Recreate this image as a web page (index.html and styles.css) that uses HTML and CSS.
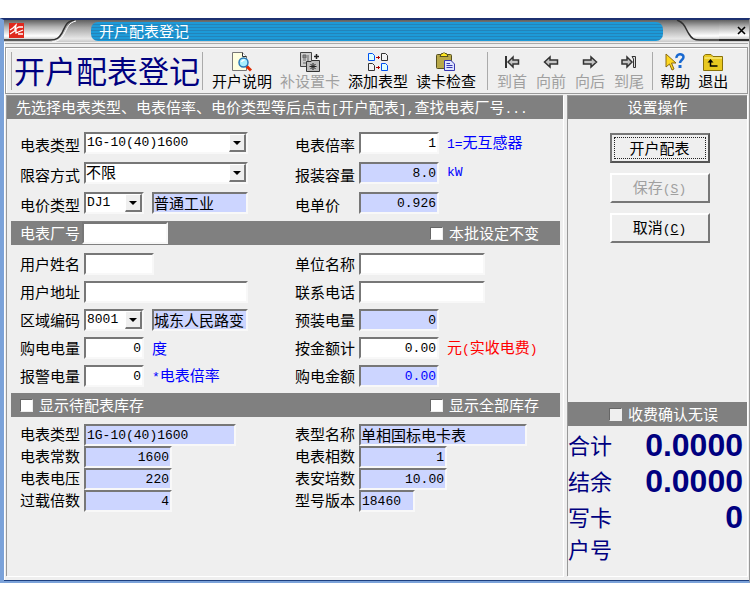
FILE: index.html
```html
<!DOCTYPE html>
<html lang="zh-CN">
<head>
  <meta charset="UTF-8">
  <meta name="viewport" content="width=device-width, initial-scale=1.0">
  <title>开户配表登记</title>
  <link rel="stylesheet" href="styles.css">
</head>
<body>
  <div class="window">
    <header class="titlebar">
      <svg class="cap" width="87" height="22" viewBox="0 0 87 22">
        <defs>
          <linearGradient id="metal" x1="0" y1="0" x2="0" y2="1">
            <stop offset="0" stop-color="#606060"/>
            <stop offset="0.35" stop-color="#b4b4b4"/>
            <stop offset="0.8" stop-color="#ffffff"/>
            <stop offset="1" stop-color="#c0c0c0"/>
          </linearGradient>
        </defs>
        <path d="M0 0H70C62 2 61 8 58 13C55 19 52 20 46 20H0Z" fill="url(#metal)"/>
        <path d="M0 20H46C53 20 55 18 58 13C62 5 62 2 70 0" fill="none" stroke="#303030" stroke-width="1.500"/>
        <path d="M48 22C55 21 57 19 60 14C64 7 64 3 72 1" fill="none" stroke="#fff"/>
        <rect x="5" y="3" width="15" height="15" fill="#e0281c"/>
        <path d="M6 10L9 8L12 5L11 9L15 7H19M6 14L9 12L12 10L12 13L19 10M14 14L19 14" fill="none" stroke="#fff" stroke-width="1.300"/>
      </svg>
      <h1 class="caption">开户配表登记</h1>
      <svg class="cap" width="56" height="22" viewBox="0 0 56 22">
        <path d="M14 0C22 3 22 8 26 14C29 19 31 20 37 20H56V0Z" fill="url(#metal)"/>
        <path d="M14 0C22 3 22 8 26 14C29 19 31 20 37 20H56" fill="none" stroke="#303030" stroke-width="1.500"/>
      </svg>
      <button class="close" type="button" aria-label="关闭">
        <svg width="9" height="9" viewBox="0 0 9 9"><path d="M1 1L8 8M8 1L1 8" stroke="#000" stroke-width="1.600"/></svg>
      </button>
    </header>

    <div class="toolbar">
      <h2 class="page-title">开户配表登记</h2>
      <div class="tools">
        <button class="tool" type="button">
          <svg width="20" height="20" viewBox="0 0 20 20">
            <path d="M.5 .5H10.500L14.500 4.500V18.500H.5Z" fill="#ffffe0" stroke="#777"/>
            <path d="M10.500 .5V4.500H14.500" fill="#fff" stroke="#333"/>
            <path d="M14.500 14L19 18.500" stroke="#e02a00" stroke-width="3"/>
            <circle cx="11.500" cy="10.500" r="4.500" fill="#a8f0ff" stroke="#2878b8" stroke-width="1.500"/>
            <path d="M9.500 10C10 8.500 11 8 12.500 8" fill="none" stroke="#fff" stroke-width="1.500"/>
          </svg>
          <span>开户说明</span>
        </button>
        <button class="tool" type="button" disabled>
          <svg width="20" height="20" viewBox="0 0 20 20">
            <path d="M.5 .5H11.500V14.500H.5Z" fill="#ccc" stroke="#444"/>
            <path d="M3 3H6V6H3ZM8 3V9M3 8H6M3 11H6" fill="#888" stroke="#666"/>
            <path d="M16.500 2V7M14 4.500H19" stroke="#222" stroke-width="1.500"/>
            <path d="M6.500 9.500H11L12 8.500H19.500V19.500H6.500Z" fill="#bbb" stroke="#333"/>
            <path d="M13 11V18M9.500 14.500H16.500M10.500 12L15.500 17M15.500 12L10.500 17" stroke="#222"/>
          </svg>
          <span>补设置卡</span>
        </button>
        <button class="tool" type="button">
          <svg width="20" height="20" viewBox="0 0 20 20">
            <path d="M.5 1.500H4.500L6.500 3.500V8.500H.5ZM13.500 11.500H17.500L19.500 13.500V18.500H13.500Z" fill="#dff" stroke="#0050f0"/>
            <path d="M13.500 1.500H17.500L19.500 3.500V8.500H13.500ZM.5 11.500H4.500L6.500 13.500V18.500H.5Z" fill="#f4f4f4" stroke="#333"/>
            <path d="M8 5.500H12M10.500 4V7M8 15.500H12M10.500 14V17" stroke="#b00000"/>
          </svg>
          <span>添加表型</span>
        </button>
        <button class="tool" type="button">
          <svg width="20" height="20" viewBox="0 0 20 20">
            <rect x=".5" y="2.500" width="15" height="14" rx="1" fill="#b8a848" stroke="#555020"/>
            <path d="M4 4.500H12L10.500 1.500H9L8 .5L7 1.500H5.500Z" fill="#ffe820" stroke="#555020"/>
            <path d="M8.500 8.500H15L18.500 12V18.500H8.500Z" fill="#dfe4ff" stroke="#3838b0"/>
            <path d="M10.500 11.500H14M10.500 13.500H16.500M10.500 15.500H16.500" stroke="#3838b0"/>
          </svg>
          <span>读卡检查</span>
        </button>
      </div>
      <div class="tools nav">
        <button class="tool" type="button" disabled>
          <svg width="16" height="20" viewBox="0 0 16 20">
            <path d="M2 4V16" stroke="#333" stroke-width="2"/>
            <path d="M4 10L9 5V8H14.500V12H9V15Z" fill="#c4c4c4" stroke="#333" stroke-width="1.500"/>
          </svg>
          <span>到首</span>
        </button>
        <button class="tool" type="button" disabled>
          <svg width="16" height="20" viewBox="0 0 16 20">
            <path d="M1.500 10L7 5V8H14.500V12H7V15Z" fill="#c4c4c4" stroke="#333" stroke-width="1.500"/>
          </svg>
          <span>向前</span>
        </button>
        <button class="tool" type="button" disabled>
          <svg width="16" height="20" viewBox="0 0 16 20">
            <path d="M14.500 10L9 5V8H1.500V12H9V15Z" fill="#c4c4c4" stroke="#333" stroke-width="1.500"/>
          </svg>
          <span>向后</span>
        </button>
        <button class="tool" type="button" disabled>
          <svg width="16" height="20" viewBox="0 0 16 20">
            <path d="M11 10L6 5V8H1V12H6V15Z" fill="#c4c4c4" stroke="#333" stroke-width="1.500"/>
            <path d="M11 4.500H14.500V15.500H12.500V7Z" fill="#ddd" stroke="#333"/>
          </svg>
          <span>到尾</span>
        </button>
      </div>
      <div class="tools last">
        <button class="tool" type="button">
          <svg width="20" height="20" viewBox="0 0 20 20">
            <path d="M1 2V15L4.500 12L7 18L9 17L6.500 11H11Z" fill="#ffd820" stroke="#8a6a10"/>
            <path d="M11.500 6C11 1.500 18.500 1 18.500 5C18.500 8 15 8 15 11" fill="none" stroke="#1868d0" stroke-width="2.500"/>
            <rect x="13.500" y="13" width="3" height="3" fill="#1868d0"/>
          </svg>
          <span>帮助</span>
        </button>
        <button class="tool" type="button">
          <svg width="20" height="20" viewBox="0 0 20 20">
            <path d="M.5 18.500V4L2.500 2.500H8L10 4.500H19.500V18.500Z" fill="#e8c820" stroke="#8a7208"/>
            <path d="M1.500 6H19" stroke="#fff7a0"/>
            <path d="M7.500 9V14H14.500" fill="none" stroke="#000" stroke-width="1.500"/>
            <path d="M4.500 10.500L7.500 7L10.500 10.500Z" fill="#000"/>
          </svg>
          <span>退出</span>
        </button>
      </div>
    </div>

    <main class="content">
      <form class="panel form-panel">
        <p class="banner">先选择电表类型、电表倍率、电价类型等后点击<span class="half">[</span>开户配表<span class="half">],</span>查找电表厂号<span class="half">...</span></p>

        <div class="fields meter">
          <label for="meterType">电表类型</label>
          <div class="cell">
            <div class="combo w-long">
              <select id="meterType"><option>1G-10(40)1600</option></select>
              <svg class="arrow" width="17" height="18" viewBox="0 0 14 15"><path d="M3 6H11L7 10Z"/></svg>
            </div>
          </div>
          <label for="ratio">电表倍率</label>
          <div class="cell">
            <input class="w-num right" id="ratio" type="text" value="1">
            <span class="hint"><span class="half">1=</span>无互感器</span>
          </div>

          <label for="limitMode">限容方式</label>
          <div class="cell">
            <div class="combo w-long">
              <select class="cn" id="limitMode"><option>不限</option></select>
              <svg class="arrow" width="17" height="18" viewBox="0 0 14 15"><path d="M3 6H11L7 10Z"/></svg>
            </div>
          </div>
          <label for="capacity">报装容量</label>
          <div class="cell">
            <input class="w-num right" id="capacity" type="text" value="8.0" readonly>
            <span class="hint half">kW</span>
          </div>

          <label for="priceType">电价类型</label>
          <div class="cell">
            <div class="combo w-short">
              <select id="priceType"><option>DJ1</option></select>
              <svg class="arrow" width="17" height="18" viewBox="0 0 14 15"><path d="M3 6H11L7 10Z"/></svg>
            </div>
            <input class="cn w-name" type="text" value="普通工业" aria-label="电价类型名称" readonly>
          </div>
          <label for="unitPrice">电单价</label>
          <div class="cell">
            <input class="w-num right" id="unitPrice" type="text" value="0.926" readonly>
          </div>
        </div>

        <div class="strip">
          <label for="factoryNo">电表厂号</label>
          <input class="w-factory" id="factoryNo" type="text">
          <label class="check side"><input type="checkbox">本批设定不变</label>
        </div>

        <div class="fields user">
          <label for="userName">用户姓名</label>
          <div class="cell"><input class="w-user" id="userName" type="text"></div>
          <label for="company">单位名称</label>
          <div class="cell"><input class="w-company" id="company" type="text"></div>

          <label for="address">用户地址</label>
          <div class="cell"><input class="w-long" id="address" type="text"></div>
          <label for="phone">联系电话</label>
          <div class="cell"><input class="w-company" id="phone" type="text"></div>

          <label for="area">区域编码</label>
          <div class="cell">
            <div class="combo w-short">
              <select id="area"><option>8001</option></select>
              <svg class="arrow" width="17" height="18" viewBox="0 0 14 15"><path d="M3 6H11L7 10Z"/></svg>
            </div>
            <input class="cn w-name" type="text" value="城东人民路变" aria-label="区域名称" readonly>
          </div>
          <label for="preload">预装电量</label>
          <div class="cell"><input class="w-num right" id="preload" type="text" value="0" readonly></div>

          <label for="buyPower">购电电量</label>
          <div class="cell">
            <input class="w-short right" id="buyPower" type="text" value="0">
            <span class="hint">度</span>
          </div>
          <label for="byMoney">按金额计</label>
          <div class="cell">
            <input class="w-num right" id="byMoney" type="text" value="0.00">
            <span class="hint warn">元<span class="half">(</span>实收电费<span class="half">)</span></span>
          </div>

          <label for="alarmPower">报警电量</label>
          <div class="cell">
            <input class="w-short right" id="alarmPower" type="text" value="0">
            <span class="hint"><span class="half">*</span>电表倍率</span>
          </div>
          <label for="buyMoney">购电金额</label>
          <div class="cell"><input class="w-num right blue" id="buyMoney" type="text" value="0.00" readonly></div>
        </div>

        <div class="strip">
          <label class="check"><input type="checkbox">显示待配表库存</label>
          <label class="check side"><input type="checkbox">显示全部库存</label>
        </div>

        <div class="fields stock">
          <label for="sType">电表类型</label>
          <div class="cell"><input class="w-type" id="sType" type="text" value="1G-10(40)1600" readonly></div>
          <label for="sName">表型名称</label>
          <div class="cell"><input class="cn w-model" id="sName" type="text" value="单相国标电卡表" readonly></div>

          <label for="sConst">电表常数</label>
          <div class="cell"><input class="w-stock right" id="sConst" type="text" value="1600" readonly></div>
          <label for="sPhase">电表相数</label>
          <div class="cell"><input class="w-stock right" id="sPhase" type="text" value="1" readonly></div>

          <label for="sVolt">电表电压</label>
          <div class="cell"><input class="w-stock right" id="sVolt" type="text" value="220" readonly></div>
          <label for="sAmp">表安培数</label>
          <div class="cell"><input class="w-stock right" id="sAmp" type="text" value="10.00" readonly></div>

          <label for="sOver">过载倍数</label>
          <div class="cell"><input class="w-stock right" id="sOver" type="text" value="4" readonly></div>
          <label for="sVer">型号版本</label>
          <div class="cell"><input class="w-version" id="sVer" type="text" value="18460" readonly></div>
        </div>
      </form>

      <aside class="panel side-panel">
        <h3 class="banner centered">设置操作</h3>
        <div class="actions">
          <button class="btn primary" type="button">开户配表</button>
          <button class="btn" type="button" disabled>保存<span class="half">(<u>S</u>)</span></button>
          <button class="btn" type="button">取消<span class="half">(<u>C</u>)</span></button>
        </div>
        <div class="confirm">
          <label class="check"><input type="checkbox" disabled>收费确认无误</label>
        </div>
        <dl class="totals">
          <dt>合计</dt><dd>0.0000</dd>
          <dt>结余</dt><dd>0.0000</dd>
          <dt>写卡</dt><dd>0</dd>
          <dt>户号</dt><dd></dd>
        </dl>
      </aside>
    </main>
  </div>
</body>
</html>
```

FILE: styles.css
```css
* {
  box-sizing: border-box;
}

body {
  margin: 0;
  padding-top: 18px;
  background: #fff;
  color: #000;
  font: 15px/20px "Noto Sans CJK SC", sans-serif;
}

h1, h2, h3, p, dl, dd {
  margin: 0;
  font-weight: normal;
}

button, input, select {
  font: inherit;
  color: inherit;
}

.window {
  display: flex;
  flex-direction: column;
  min-height: 565px;
  background: #efefef;
  border: solid #7ba2d9;
  border-width: 2px 1px 2px 4px;
  border-top-color: #1c3070;
  border-right-color: #999;
  box-shadow: inset 0 -1px #1d3f80, inset 1px 0 #fff;
}

/* title bar */
.titlebar {
  display: flex;
  height: 22px;
  background: linear-gradient(#606060, #a8a8a8 35%, #e8e8e8 85%, #c8c8c8);
}

.cap {
  display: block;
  flex: none;
}

.caption {
  flex: 1;
  height: 19px;
  margin-top: 2px;
  padding-left: 8px;
  border-radius: 7px;
  background: repeating-linear-gradient(#1d9ad8 0 2px, #2384ba 2px 3px);
  color: #fff;
  font-size: 15px;
  line-height: 17px;
}

.close {
  display: flex;
  align-items: center;
  justify-content: center;
  width: 30px;
  height: 21px;
  padding: 2px 0 0 14px;
  border: 0;
  border-bottom: 2px solid #303030;
  background: linear-gradient(#606060, #b4b4b4 35%, #fff 80%, #ccc);
}

/* toolbar */
.toolbar {
  display: flex;
  align-items: center;
  height: 47px;
  margin: 5px 1px 0;
  padding: 2px 0 2px 5px;
  border: 1px solid #999;
  box-shadow: inset 1px 1px #fff, 0 -3px #efefef, 0 -4px #aaa;
}

.page-title {
  width: 192px;
  height: 38px;
  padding-left: 2px;
  border: solid #aaa;
  border-width: 0 1px;
  color: #000080;
  font-size: 31px;
  line-height: 36px;
  white-space: nowrap;
}

.tools {
  display: flex;
  gap: 8px;
  height: 38px;
  padding-left: 9px;
}

.tool {
  display: flex;
  flex-direction: column;
  align-items: center;
  padding: 0;
  border: 0;
  background: none;
  line-height: 18px;
}

.tool svg {
  flex: none;
}

.tool:disabled {
  color: #a0a0a0;
}

.nav {
  gap: 9px;
  margin-left: 11px;
  border-left: 1px solid #aaa;
}

.last {
  margin-left: 8px;
  padding-left: 7px;
  border-left: 1px solid #aaa;
}

/* panels */
.content {
  display: flex;
  flex: 1;
  gap: 4px;
  padding: 1px 2px 5px;
}

.panel {
  border: solid #999;
  border-width: 1px 0 0 1px;
  box-shadow: 1px 1px #fff;
}

.form-panel {
  flex: 1;
}

.side-panel {
  display: flex;
  flex-direction: column;
  width: 180px;
}

.banner {
  height: 23px;
  padding-left: 9px;
  background: #808080;
  color: #fff;
  font-size: 15px;
  line-height: 21px;
  white-space: nowrap;
}

.centered {
  padding-left: 0;
  text-align: center;
}

.half {
  font-family: "Liberation Mono", monospace;
  font-size: 13px;
}

/* form rows */
.fields {
  display: grid;
  grid-template-columns: 64px 211px 64px 1fr;
  grid-auto-rows: 22px;
  padding-left: 13px;
}

.meter {
  row-gap: 8px;
  margin: 13px 0 7px;
}

.user {
  row-gap: 6px;
  margin: 8px 0 6px;
}

.stock {
  margin-top: 7px;
}

.cell {
  display: flex;
  align-items: center;
  gap: 8px;
  white-space: nowrap;
}

.fields label {
  line-height: 22px;
}

.meter label {
  line-height: 26px;
}

.stock label {
  line-height: 19px;
}

.form-panel input[type="text"],
.combo select {
  height: 22px;
  padding: 0 1px;
  border: 2px solid;
  border-color: #777 #f8f8f8 #f8f8f8 #777;
  border-radius: 0;
  background: #fff;
  font: 13px/18px "Liberation Mono", monospace;
}

.form-panel input[type="text"]:read-only {
  background: #ccd5ff;
}

.form-panel input.cn,
.combo select.cn {
  padding: 0 0 2px;
  font: 15px/16px "Noto Sans CJK SC", sans-serif;
}

.form-panel .right {
  text-align: right;
}

.form-panel .blue {
  color: #0000ff;
}

.combo {
  position: relative;
}

.combo select {
  display: block;
  width: 100%;
  appearance: none;
}

.arrow {
  position: absolute;
  top: 2px;
  right: 2px;
  background: #efefef;
  border: solid;
  border-width: 1px 2px 2px 1px;
  border-color: #fff #777 #777 #fff;
  pointer-events: none;
}

.w-long { width: 164px; }
.w-short { width: 60px; }
.w-name { width: 96px; }
.w-num { width: 80px; }
.w-factory { width: 86px; }
.w-user { width: 70px; }
.w-company { width: 126px; }
.w-type { width: 152px; }
.w-model { width: 168px; }
.w-stock { width: 88px; }
.w-version { width: 56px; }

.hint {
  color: #0000ff;
}

.warn {
  color: #ff0000;
}

/* grey strips */
.strip {
  display: flex;
  align-items: center;
  height: 24px;
  margin: 0 3px 0 4px;
  padding-left: 9px;
  background: #808080;
  color: #fff;
}

.strip .w-factory {
  margin-left: 2px;
}

.check {
  display: flex;
  align-items: center;
  gap: 6px;
}

.check input {
  width: 13px;
  height: 13px;
  margin: 0;
  border: 1px solid;
  border-color: #666 #eee #eee #666;
  background: #fff;
  appearance: none;
}

.check input:disabled {
  background: #efefef;
}

.side {
  margin-left: auto;
  width: 130px;
}

/* right column */
.actions {
  display: flex;
  flex-direction: column;
  align-items: center;
  gap: 10px;
  padding: 14px 0 0 4px;
}

.btn {
  width: 100px;
  height: 30px;
  padding: 0;
  border: 2px solid;
  border-color: #fff #777 #777 #fff;
  background: #efefef;
  line-height: 22px;
}

.btn:disabled {
  color: #a0a0a0;
}

.primary {
  border-color: #777 #555 #555 #777;
  outline: 1px dotted #222;
  outline-offset: -5px;
}

.confirm {
  display: flex;
  justify-content: center;
  height: 24px;
  margin-top: auto;
  padding-left: 12px;
  background: #808080;
  color: #fff;
}

.totals {
  display: grid;
  grid-template-columns: auto 1fr;
  grid-template-rows: repeat(3, 36px) 28px;
  height: 150px;
  padding-top: 1px;
  color: #000080;
  font-size: 22px;
  line-height: 34px;
}

.totals dd {
  padding-right: 4px;
  font: bold 32px/36px "Liberation Sans", Arial, sans-serif;
  text-align: right;
}

.totals dt:last-of-type {
  line-height: 26px;
}
```
